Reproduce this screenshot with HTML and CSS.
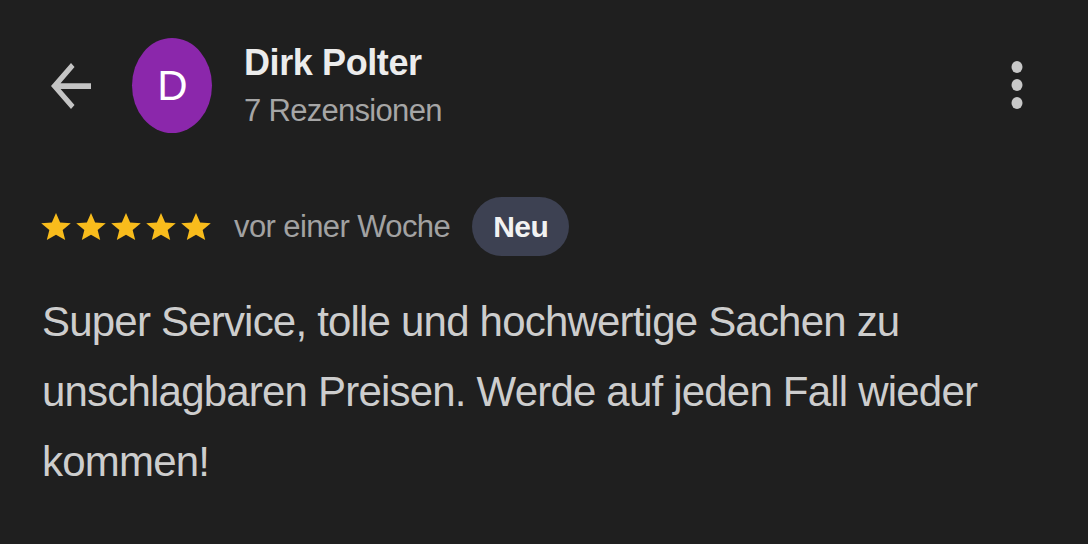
FILE: index.html
```html
<!DOCTYPE html>
<html lang="de">
<head>
  <meta charset="UTF-8">
  <meta name="viewport" content="width=device-width, initial-scale=1.0">
  <title>Rezension - Dirk Polter</title>
  <link rel="stylesheet" href="styles.css">
</head>
<body>
  <div class="header">
    <svg class="back" viewBox="4 4 16 16" width="40" height="46" preserveAspectRatio="none">
      <path d="M20 11H7.83l5.59-5.59L12 4l-8 8 8 8 1.41-1.41L7.83 13H20v-2z" fill="#c4c4c4"/>
    </svg>
    <div class="avatar">D</div>
    <div class="who">
      <div class="name">Dirk Polter</div>
      <div class="count">7 Rezensionen</div>
    </div>
    <svg class="more" viewBox="0 0 12 48" width="12" height="48">
      <ellipse cx="6" cy="6" rx="5.5" ry="6" fill="#c8c8c8"/>
      <ellipse cx="6" cy="24" rx="5.5" ry="6" fill="#c8c8c8"/>
      <ellipse cx="6" cy="42" rx="5.5" ry="6" fill="#c8c8c8"/>
    </svg>
  </div>

  <div class="meta">
    <div class="stars">
      <svg viewBox="0 0 24 24" width="32" height="31" preserveAspectRatio="none"><path d="M12 1.5l3.1 7.4 8 .6-6.1 5.2 1.9 7.8L12 18.3l-6.9 4.2 1.9-7.8L.9 9.5l8-.6z" fill="#f8bc1c"/></svg>
      <svg viewBox="0 0 24 24" width="32" height="31" preserveAspectRatio="none"><path d="M12 1.5l3.1 7.4 8 .6-6.1 5.2 1.9 7.8L12 18.3l-6.9 4.2 1.9-7.8L.9 9.5l8-.6z" fill="#f8bc1c"/></svg>
      <svg viewBox="0 0 24 24" width="32" height="31" preserveAspectRatio="none"><path d="M12 1.5l3.1 7.4 8 .6-6.1 5.2 1.9 7.8L12 18.3l-6.9 4.2 1.9-7.8L.9 9.5l8-.6z" fill="#f8bc1c"/></svg>
      <svg viewBox="0 0 24 24" width="32" height="31" preserveAspectRatio="none"><path d="M12 1.5l3.1 7.4 8 .6-6.1 5.2 1.9 7.8L12 18.3l-6.9 4.2 1.9-7.8L.9 9.5l8-.6z" fill="#f8bc1c"/></svg>
      <svg viewBox="0 0 24 24" width="32" height="31" preserveAspectRatio="none"><path d="M12 1.5l3.1 7.4 8 .6-6.1 5.2 1.9 7.8L12 18.3l-6.9 4.2 1.9-7.8L.9 9.5l8-.6z" fill="#f8bc1c"/></svg>
    </div>
    <span class="when">vor einer Woche</span>
    <span class="badge">Neu</span>
  </div>

  <p class="text">Super Service, tolle und hochwertige Sachen zu unschlagbaren Preisen. Werde auf jeden Fall wieder kommen!</p>
</body>
</html>
```

FILE: styles.css
```css
body { margin: 0; background: #1f1f1f; font-family: "Liberation Sans", Arial, sans-serif; color: #d0d0d0; }
.header { display: flex; align-items: flex-start; padding: 38px 0 0 51px; }
.back { margin-top: 25px; }
.avatar { width: 80px; height: 95px; border-radius: 50%; background: #8b27ab; color: #fff; font-size: 42px; line-height: 95px; text-align: center; margin-left: 41px; letter-spacing: -1px; }
.who { margin: 3px 0 0 32px; }
.name { font-size: 36px; line-height: 44px; font-weight: bold; color: #ececec; letter-spacing: -0.4px; }
.count { font-size: 31px; line-height: 52px; color: #a6a6a6; letter-spacing: -0.7px; }
.more { margin: 23px 65px 0 auto; }
.meta { display: flex; align-items: center; margin: 60px 0 0 40px; }
.stars { display: flex; gap: 3px; }
.when { font-size: 31px; color: #a2a2a2; letter-spacing: -0.6px; margin-left: 22px; }
.badge { margin-left: 22px; height: 59px; line-height: 59px; padding: 0 21px; border-radius: 30px; background: #3d4152; color: #f2f2f2; font-size: 30px; font-weight: bold; letter-spacing: -0.5px; }
.text { margin: 31px 40px 0 42px; font-size: 42px; line-height: 70px; letter-spacing: -0.8px; color: #cdcdcd; }
```
